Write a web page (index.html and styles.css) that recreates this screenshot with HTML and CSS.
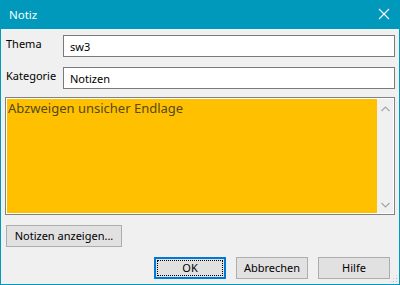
FILE: index.html
```html
<!DOCTYPE html>
<html lang="de">
<head>
<meta charset="utf-8">
<title>Notiz</title>
<link rel="stylesheet" href="styles.css">
</head>
<body>
<div class="window">
  <div class="titlebar">
    <span class="title">Notiz</span>
    <svg class="close" width="12" height="12" viewBox="0 0 12 12"><path d="M1 1 L11 11 M11 1 L1 11" stroke="#fff" stroke-width="1.1" fill="none"/></svg>
  </div>
  <div class="body">
    <div class="fields">
      <label class="label">Thema</label>
      <div class="input">sw3</div>
      <label class="label">Kategorie</label>
      <div class="input">Notizen</div>
    </div>
    <div class="memo">
      <div class="memo-text">Abzweigen unsicher Endlage</div>
      <div class="scrollbar">
        <svg width="9" height="6" viewBox="0 0 9 6"><path d="M0.5 5 L4.5 1 L8.5 5" stroke="#a6a6a6" stroke-width="1.2" fill="none"/></svg>
        <svg width="9" height="6" viewBox="0 0 9 6"><path d="M0.5 1 L4.5 5 L8.5 1" stroke="#a6a6a6" stroke-width="1.2" fill="none"/></svg>
      </div>
    </div>
    <div class="row-left">
      <div class="btn btn-wide">Notizen anzeigen...</div>
    </div>
    <div class="row-right">
      <div class="btn btn-default"><span class="focus">OK</span></div>
      <div class="btn">Abbrechen</div>
      <div class="btn">Hilfe</div>
    </div>
    <div class="grip"></div>
  </div>
</div>
</body>
</html>
```
FILE: styles.css
```css
html, body {
  margin: 0;
  padding: 0;
}
body {
  font-family: "Noto Sans", "Open Sans", "DejaVu Sans", sans-serif;
  font-size: 11px;
  color: #000;
  background: #f0f0f0;
}
.window {
  width: 400px;
  height: 285px;
  display: flex;
  flex-direction: column;
}
.titlebar {
  height: 29px;
  flex: none;
  background: #0099bc;
  display: flex;
  align-items: center;
  justify-content: space-between;
  padding: 0 10px 0 9px;
}
.title {
  color: #fff;
  font-size: 11.5px;
  margin-top: -1px;
}
.close {
  margin-top: -1px;
}
.body {
  flex: 1;
  position: relative;
  border: 1px solid #0099bc;
  border-top: 0;
  background: #f0f0f0;
  padding: 6px 4px 0 4px;
  display: flex;
  flex-direction: column;
}
.fields {
  display: grid;
  grid-template-columns: 58px 1fr;
  row-gap: 10px;
}
.label {
  padding-left: 1px;
  padding-top: 2px;
  line-height: 14px;
  color: #000;
}
.input {
  height: 22px;
  box-sizing: border-box;
  border: 1px solid #7a7a7a;
  background: #fff;
  padding: 0 6px;
  line-height: 21px;
}
.memo {
  margin-top: 8px;
  height: 118px;
  box-sizing: border-box;
  border: 1px solid #828282;
  padding: 1px;
  background: #fff;
  display: flex;
}
.memo-text {
  flex: 1;
  background: #ffc000;
  color: #56491a;
  font-size: 13px;
  padding: 1px 2px 0 1px;
  line-height: 17px;
}
.scrollbar {
  width: 16px;
  background: #f0f0f0;
  display: flex;
  flex-direction: column;
  align-items: center;
  justify-content: space-between;
  padding: 7px 0 5px;
}
.row-left {
  margin-top: 10px;
  padding-left: 1px;
  display: flex;
}
.row-right {
  margin-top: 10px;
  display: flex;
  justify-content: flex-end;
  gap: 10px;
  padding-right: 5px;
}
.btn {
  width: 72px;
  height: 22px;
  box-sizing: border-box;
  border: 1px solid #adadad;
  background: #e1e1e1;
  display: flex;
  align-items: center;
  justify-content: center;
  line-height: 14px;
}
.btn-wide {
  width: 116px;
}
.btn-default {
  border: 2px solid #0078d7;
  padding: 1px;
}
.focus {
  flex: 1;
  align-self: stretch;
  display: flex;
  align-items: center;
  justify-content: center;
  border: 1px dotted #000;
}
.grip {
  position: absolute;
  right: 1px;
  bottom: 1px;
  width: 9px;
  height: 9px;
  background:
    radial-gradient(circle, #b4b4b4 0.8px, transparent 1px) 0 0 / 3px 3px;
  clip-path: polygon(100% 0, 100% 100%, 0 100%);
}
```
